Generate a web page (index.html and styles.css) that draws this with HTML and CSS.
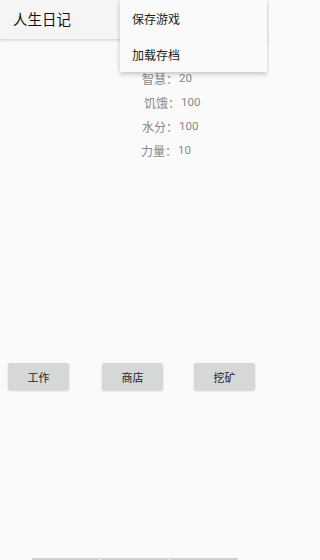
FILE: index.html
```html
<!DOCTYPE html>
<html lang="zh">
<head>
<meta charset="utf-8">
<title>人生日记</title>
<link rel="stylesheet" href="styles.css">
</head>
<body>
<div class="screen">
  <header class="appbar"><span class="title">人生日记</span></header>
  <section class="stats">
    <div class="row"><span class="label">智慧：</span><span class="value">20</span></div>
    <div class="row"><span class="label l2">饥饿：</span><span class="value">100</span></div>
    <div class="row"><span class="label">水分：</span><span class="value">100</span></div>
    <div class="row"><span class="label l4">力量：</span><span class="value">10</span></div>
  </section>
  <div class="actions">
    <button class="btn">工作</button>
    <button class="btn b2">商店</button>
    <button class="btn b3">挖矿</button>
  </div>
  <footer class="bottom">
    <span class="seg"></span><span class="seg"></span><span class="seg"></span>
  </footer>
  <div class="menu">
    <div class="item">保存游戏</div>
    <div class="item">加载存档</div>
  </div>
</div>
</body>
</html>
```
FILE: styles.css
```css
html, body {
  margin: 0;
  padding: 0;
  background: #fafafa;
}
body {
  font-family: "Noto Sans CJK SC", "Noto Sans", Roboto, sans-serif;
}
.screen {
  position: relative;
  width: 269px;
  height: 560px;
  overflow: hidden;
  display: flex;
  flex-direction: column;
  background: #fafafa;
}
.appbar {
  height: 39px;
  flex: none;
  background: #f5f5f5;
  box-shadow: 0 1px 3px rgba(0,0,0,0.18);
  display: flex;
  align-items: center;
  padding-left: 13px;
  position: relative;
  z-index: 1;
}
.title {
  font-size: 14.5px;
  color: #111;
  line-height: 1;
}
.stats {
  padding-top: 27px;
  padding-left: 142px;
  display: flex;
  flex-direction: column;
}
.row {
  height: 24px;
  display: flex;
  align-items: center;
  font-size: 12px;
  color: #888888;
}
.label {
  width: 37px;
}
.l2 { margin-left: 2px; }
.l4 { margin-left: -1px; }
.value {
  font-family: Roboto, "Noto Sans", sans-serif;
  font-size: 11.5px;
}
.actions {
  margin-top: 201px;
  display: flex;
  padding-left: 8px;
}
.btn {
  width: 61px;
  height: 27px;
  border: none;
  border-radius: 2px;
  background: #d6d7d7;
  box-shadow: 0 1px 2px rgba(0,0,0,0.18);
  font-family: "Noto Sans CJK SC", sans-serif;
  font-size: 11px;
  color: #222;
  padding: 0;
}
.b2 { margin-left: 33px; }
.b3 { margin-left: 31px; }
.bottom {
  margin-top: auto;
  height: 2px;
  display: flex;
  padding-left: 32px;
}
.seg {
  width: 68px;
  height: 2px;
  background: #cfcfcf;
  margin-right: 1px;
}
.menu {
  position: absolute;
  top: 0;
  left: 120px;
  width: 147px;
  height: 72px;
  background: #fafafa;
  box-shadow: 0 2px 5px rgba(0,0,0,0.22);
  z-index: 2;
  display: flex;
  flex-direction: column;
}
.item {
  height: 36px;
  display: flex;
  align-items: center;
  padding-left: 12px;
  font-size: 12px;
  color: #222;
}
```
